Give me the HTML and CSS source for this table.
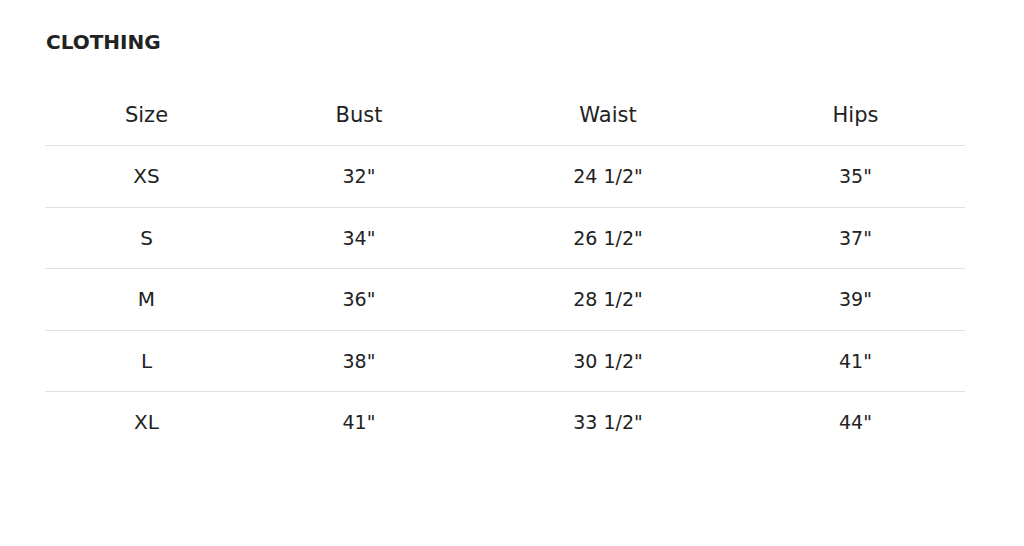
FILE: index.html
```html
<!DOCTYPE html>
<html>
<head>
<meta charset="utf-8">
<link rel="stylesheet" href="styles.css">
</head>
<body>
<div class="page">
  <h2 class="title">CLOTHING</h2>
  <table class="sizes">
    <colgroup>
      <col class="c1"><col class="c2"><col class="c3"><col class="c4">
    </colgroup>
    <thead>
      <tr><th>Size</th><th>Bust</th><th>Waist</th><th>Hips</th></tr>
    </thead>
    <tbody>
      <tr><td class="label">XS</td><td>32"</td><td>24 1/2"</td><td>35"</td></tr>
      <tr><td class="label">S</td><td>34"</td><td>26 1/2"</td><td>37"</td></tr>
      <tr><td class="label">M</td><td>36"</td><td>28 1/2"</td><td>39"</td></tr>
      <tr><td class="label">L</td><td>38"</td><td>30 1/2"</td><td>41"</td></tr>
      <tr><td class="label">XL</td><td>41"</td><td>33 1/2"</td><td>44"</td></tr>
    </tbody>
  </table>
</div>
</body>
</html>
```

FILE: styles.css
```css
html, body {
  margin: 0;
  padding: 0;
  background: #ffffff;
}
.page {
  padding: 30px 59px 0 45px;
  font-family: "DejaVu Sans", "Open Sans", sans-serif;
  color: #222222;
}
.title {
  margin: 0 0 30px 1px;
  font-size: 20px;
  line-height: 24px;
  font-weight: 700;
  color: #222222;
}
.sizes {
  width: 920px;
  border-collapse: collapse;
  table-layout: fixed;
}
.c1 { width: 203px; }
.c2 { width: 222px; }
.c3 { width: 276px; }
.c4 { width: 219px; }
.sizes th,
.sizes td {
  padding: 0;
  text-align: center;
  vertical-align: middle;
  font-size: 19px;
  font-weight: 400;
  color: #222222;
}
.sizes th {
  height: 61px;
  font-size: 21px;
}
.sizes td {
  height: 60.5px;
}
.sizes td.label {
  font-size: 20px;
}
.sizes thead th,
.sizes tbody tr:not(:last-child) td {
  border-bottom: 1px solid #e2e2e2;
}
```
